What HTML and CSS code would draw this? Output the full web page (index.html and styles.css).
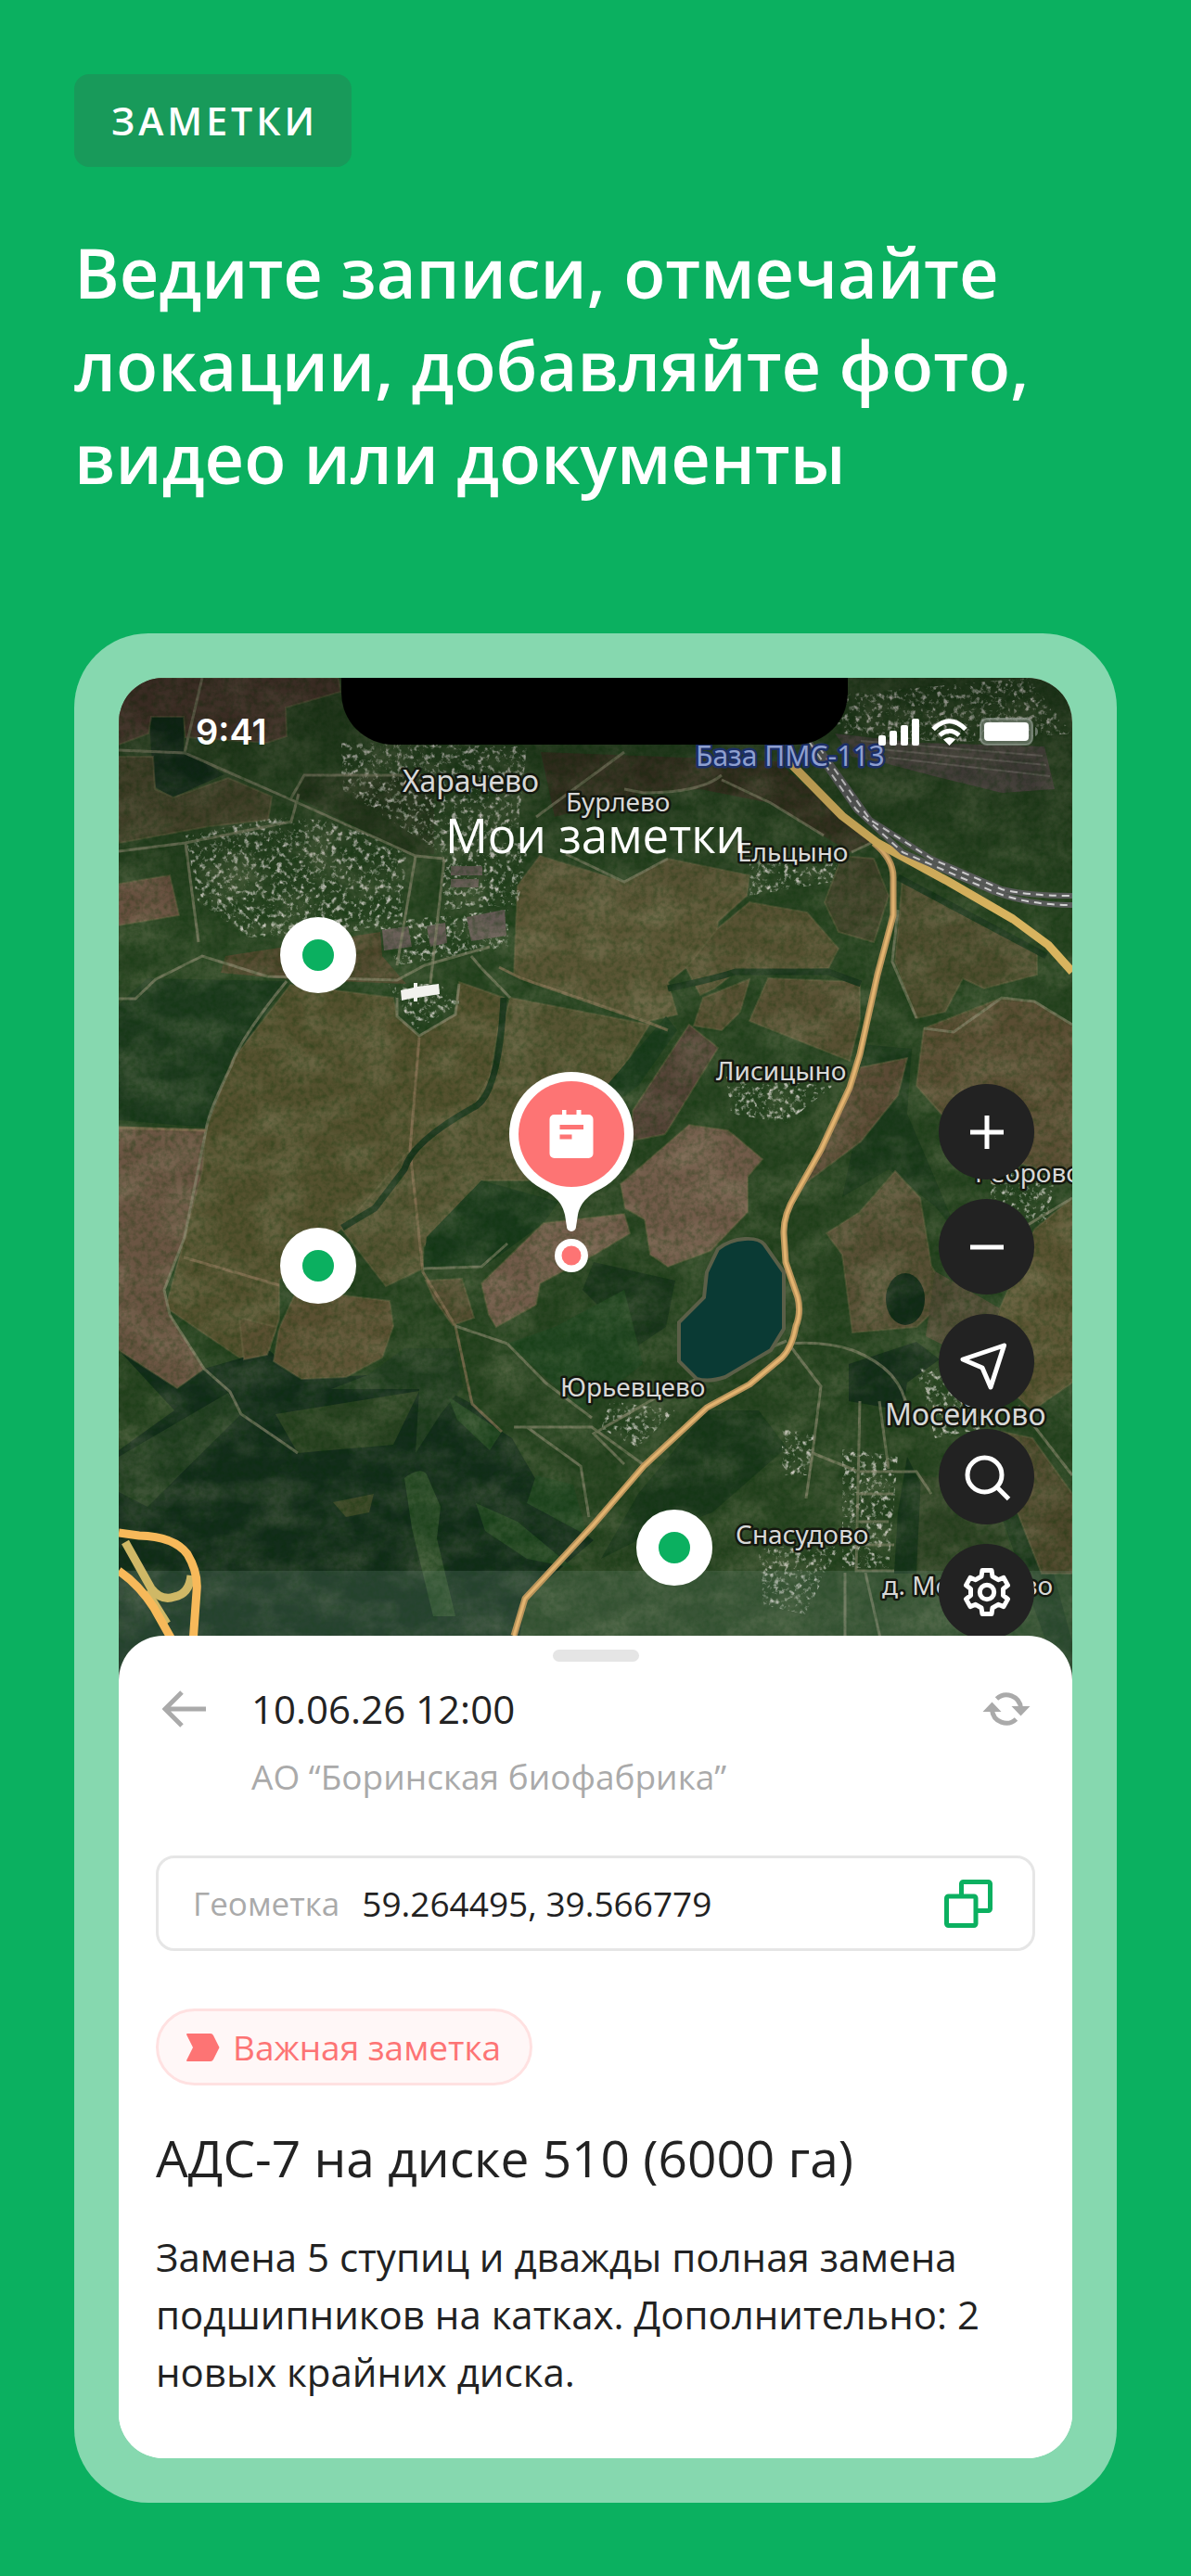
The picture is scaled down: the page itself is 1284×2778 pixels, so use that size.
FILE: index.html
```html
<!DOCTYPE html>
<html lang="ru">
<head>
<meta charset="utf-8">
<meta name="viewport" content="width=device-width, initial-scale=1">
<title>Заметки</title>
<link rel="stylesheet" href="styles.css">
</head>
<body>
<main class="page">
  <span class="badge">ЗАМЕТКИ</span>
  <h1 class="headline">Ведите записи, отмечайте локации, добавляйте фото, видео или документы</h1>

  <div class="phone">
    <div class="screen">
      <section class="map" aria-label="Карта заметок">
        <svg class="map-art" viewBox="0 0 1028 1083" preserveAspectRatio="xMidYMid slice">
          <defs>
            <filter id="grain" x="0" y="0" width="100%" height="100%">
              <feTurbulence type="fractalNoise" baseFrequency="0.16" numOctaves="3" seed="4"/>
              <feColorMatrix values="0 0 0 0 0  0 0 0 0 0.03  0 0 0 0 0  1.6 0 0 0 -0.6"/>
            </filter>
            <filter id="light" x="0" y="0" width="100%" height="100%">
              <feTurbulence type="fractalNoise" baseFrequency="0.02 0.03" numOctaves="5" seed="9"/>
              <feColorMatrix values="0 0 0 0 0.5  0 0 0 0 0.47  0 0 0 0 0.3  0 1.6 0 0 -0.6"/>
            </filter>
            <filter id="houses" x="0" y="0" width="100%" height="100%">
              <feTurbulence type="fractalNoise" baseFrequency="0.17" numOctaves="3" seed="12" result="n"/>
              <feColorMatrix in="n" values="0 0 0 0 0.56  0 0 0 0 0.56  0 0 0 0 0.5  0 4 0 0 -2.1" result="s"/>
              <feComposite in="s" in2="SourceGraphic" operator="in"/>
            </filter>
            <linearGradient id="shade" x1="0" y1="0" x2="0" y2="1">
              <stop offset="0" stop-color="#000" stop-opacity=".28"/>
              <stop offset="1" stop-color="#000" stop-opacity="0"/>
            </linearGradient>
          </defs>

          <rect width="1028" height="1083" fill="#294422"/>

          <!-- forests -->
          <g fill="#132d1b">
            <path d="M0 725L63 766 92 745 162 725 197 756 268 752 347 765 381 783 413 813 424 820 470 900 512 930 438 993 426 1083H0V833L60 790Z"/>
            <path d="M0 352L31 324 181 327 122 417 96 485 0 477Z" fill="#1e3b1f"/>
            <path d="M33 42H70V78L114 104 58 129 40 118 35 80Z"/>
            <path d="M512 630L600 650 590 700 560 720 500 660Z" fill="#1a351c"/>
            <path d="M787 740L860 716 885 735 850 760 845 790 787 780Z" fill="#152e1b"/>
            <path d="M850 840L870 880 864 966 836 966 840 900Z" fill="#17331b"/>
            <path d="M634 790L690 790 720 830 640 900 560 930 520 950 560 880Z" fill="#1b381c"/>
            <path d="M799 395L855 400 850 470 880 540 905 600 880 570 830 530 780 560 799 470Z" fill="#1d3a1d"/>
            <path d="M955 860L990 900 1028 1040V1083L1000 1040 950 900Z" fill="#1a361b"/>
          </g>

          <!-- fields -->
          <g stroke="#6f6847" stroke-opacity=".45" stroke-width="2">
            <path fill="#4c392e" d="M0 0H237L239 15 180 32 181 63 160 70 72 64 70 42H35L32 60 0 72Z"/>
            <path fill="#28391e" d="M190 128L200 103 340 104 340 190 320 192Z" stroke="none"/>
            <path fill="#48462c" d="M0 85H37L39 120 59 129 118 108 165 128 161 153 98 160 0 178Z"/>
            <path fill="#68503f" d="M0 222L55 213 65 256 0 267Z"/>
            <path fill="#4d442a" d="M115 300L180 290 282 274 284 300 310 330 185 325 110 318Z" stroke="none"/>
            <path fill="#38332 1" d="M0 0Z"/>
            <path fill="#373321" d="M455 80L710 90 811 178 788 188 703 135 627 120 566 124 470 150Z" stroke="none"/>
            <path fill="#5c5636" d="M454 192L545 220 592 195 680 213 677 235 646 263 644 285 611 313 592 328 602 363 572 370 434 324 426 320 430 224Z"/>
            <path fill="#55512f" d="M185 331L296 345 300 365 324 386 363 363 367 328 415 345 400 430 383 463 314 509 276 572 241 593 173 649V691L162 725 130 733 51 679 71 603 94 488 122 413Z"/>
            <path fill="#575433" d="M422 345L572 374 550 410 500 480 442 542H391L328 614V637L288 656 241 595 308 515 383 463 400 430Z"/>
            <path fill="#1a3a1c" d="M391 542L474 565 458 588 391 637H328L332 603Z" stroke="none"/>
            <path fill="#1c3c1e" d="M590 365L602 380 560 440 520 470 500 470 560 400Z" stroke="none"/>
            <path fill="#6b5543" d="M0 486L94 488 90 534 71 603 49 660 55 687 92 745 63 766 0 725Z"/>
            <path fill="#5b5032" d="M173 702L192 660 292 672 296 699 284 733 245 754 197 756 167 737ZM130 690L170 700 160 730 135 735Z"/>
            <path fill="#534c30" d="M331 650L370 648 383 690 360 698 340 670Z"/>
            <path fill="#42432a" d="M780 192L814 195 830 235 814 285 776 274 761 242Z"/>
            <path fill="#585233" d="M680 242L742 253 776 292 765 313 665 317 642 335 627 342 612 313 646 270Z"/>
            <path fill="#585033" d="M700 324L799 328V370L788 413 680 370ZM630 345L680 325 670 360 650 380 620 375Z"/>
            <path fill="#504d2f" d="M845 217L990 292V320L933 335 910 324 891 360 860 367 837 306Z"/>
            <path fill="#5a4d33" d="M868 378L952 345 987 349 1028 374V540L960 520 900 485 860 440Z"/>
            <path fill="#5b4a35" d="M800 420L850 410 840 450 800 500 740 545 770 480Z"/>
            <path fill="#544337" d="M615 374L646 399 589 492 554 499V467Z"/>
            <path fill="#725b4a" d="M615 482L657 488 694 519 678 538V576L638 618 592 635 573 622 567 584 546 572 541 546Z"/>
            <path fill="#725b4a" d="M458 588L545 578 551 599 513 622 454 653 450 676 407 700 399 687 391 653 419 626Z"/>
            <path fill="#584f35" d="M837 532L864 561 876 634 895 668 860 700 791 706 780 622 763 599 799 576Z"/>
            <path fill="#5a5332" d="M987 595L1028 561V760L985 790 930 740 950 680Z"/>
            <path fill="#4e4933" d="M880 640L950 680 930 740 870 710Z" stroke="none"/>
            <path fill="#4e482c" d="M952 813L985 820 1028 880V966H995L965 890Z"/>
            <path fill="#2f4325" d="M865 860L940 870 970 966H860Z" stroke="none"/>
          </g>

          <g fill="#243f23">
            <path d="M308 723H363L371 764 347 794 320 836 324 767 229 767 268 752Z"/>
            <path d="M169 794L324 769 296 827 193 836Z" fill="#2a4222"/>
            <path d="M118 771L132 794 31 894 0 878V840Z"/>
            <path d="M308 863Q325 850 332 859L347 894 343 928 363 1012H339L316 917Z" fill="#2a4b28"/>
            <path d="M231 889L275 880 270 900 245 905Z" fill="#374423"/>
            <path d="M419 718L470 700 545 660 565 740 500 790ZM355 775L413 813 400 833 365 800ZM450 860L490 870 505 925 440 890ZM385 890L430 910 490 960 440 950 395 920Z" fill="#224622"/>
          </g>
          <ellipse cx="848" cy="670" rx="21" ry="28" fill="#132b19"/>

          <!-- settlements -->
          <g filter="url(#houses)">
            <path d="M72 170L170 150 240 155 310 190 305 270 140 280 85 240Z"/>
            <path d="M240 70L440 74 430 165 350 190 240 120Z"/>
            <path d="M347 178L442 178 430 245 350 250Z"/>
            <path d="M284 263L420 250 420 290 300 310Z"/>
            <path d="M290 330L345 330 370 350 320 380Z"/>
            <path d="M680 185L775 195 770 220 680 235Z"/>
            <path d="M655 430L770 440 720 480 660 470Z"/>
            <path d="M760 20L980 0 1028 60 900 70 780 60Z"/>
            <path d="M940 520L1010 540 1000 590 940 570Z"/>
            <path d="M860 745L930 740 930 810 880 820Z"/>
            <path d="M715 810L750 815 745 860 715 860ZM780 830L840 840 830 960 780 960ZM690 940L780 930 740 1010 695 1000Z"/>
            <path d="M530 780L600 790 560 830 520 810Z"/>
          </g>
          <g fill="#655a55">
            <path d="M284 272L312 268 316 290 286 294ZM332 268L352 264 354 286 336 290ZM375 258L416 250 418 278 380 284Z"/>
            <path d="M358 203H392V213H358ZM358 217H388V226H358Z"/>
          </g>
          <path fill="#4a4540" d="M772 60L860 70 998 74 1009 120 952 124 879 106 826 92 790 85Z"/>
          <path stroke="#6b6560" stroke-width="2" d="M800 68L996 84M810 76L1000 94M830 86L1004 106"/>

          <!-- country tracks -->
          <g fill="none" stroke="#85836a" stroke-width="3" stroke-opacity=".7">
            <path d="M0 78L71 81 185 131 320 192 351 195M71 81L90 0M185 131L200 105H340"/>
            <path d="M0 187L72 178 186 155 194 125M72 178L86 285"/>
            <path d="M0 346H18L40 325 90 300 160 322 300 326 330 310 400 290"/>
            <path d="M351 195L336 330M320 192L300 310"/>
            <path d="M300 345L300 365 324 386 363 363 367 330M380 300L390 312 422 345"/>
            <path d="M181 327Q130 390 122 417Q96 470 94 488L71 603 49 660 55 687 92 745 120 770 132 794 170 820 193 836"/>
            <path stroke="#8d7457" d="M324 388L314 509 328 641 363 699 381 783 413 813"/>
            <path stroke="#8d7457" d="M410 312L434 324 572 372 592 380M70 625L173 655M0 485L94 488"/>
            <path d="M426 808H510L565 848M419 718L460 760 510 798M328 637L391 635 419 610M363 699L419 718M440 808L498 850 507 905"/>
            <path d="M545 120L566 124Q627 124 650 105M450 150L545 80M650 110L703 135 760 170M790 188L811 178M482 190L545 220 592 195"/>
            <path d="M722 718L757 764 748 836 741 885M748 836L795 855M722 718Q761 715 791 725Q845 746 850 790"/>
            <path d="M799 780L795 963H836M820 780L830 853M795 856H860L876 880M795 880H835M795 910H830M795 935H836M545 848L512 815 590 770 720 715"/>
            <path d="M783 965V1083M805 965L822 1040M860 367L834 306 840 250M868 378L900 382 952 345 987 349 1028 374M1028 561L980 590M970 785L1028 860"/>
          </g>
          <path fill="none" stroke="#1a351c" stroke-width="7" d="M415 345Q410 450 383 463Q316 500 308 530L276 572 241 593M592 335Q640 325 665 317H765L800 330M840 215L1000 300"/>

          <rect width="1028" height="1083" filter="url(#light)" opacity=".28"/>
          <rect width="1028" height="1083" filter="url(#grain)" opacity=".4"/>

          <path fill="#f2f2ee" d="M304 337L318 334V329H322V333L345 330 346 341 322 345V349H318V345L305 348Z"/>
          <path fill="#0a3a34" stroke="#5b5f48" stroke-width="4" d="M675 605Q690 604 696 611L717 641V702L703 725 654 754Q636 760 623 756L604 737V695L631 668 634 641 646 616Q658 606 675 605Z"/>
          <rect y="963" width="1028" height="120" fill="#7d9a8a" opacity=".2"/>

          <!-- highways -->
          <g fill="none" stroke-linejoin="round">
            <path stroke="#b8935a" stroke-width="7" d="M814 178Q835 195 835 215V256L818 320 799 406 788 442 757 509 730 557Q716 580 717 600L719 630 732 668Q736 685 730 699Q726 722 715 733L680 762 634 787 566 850 512 913 438 993 426 1033"/>
            <path stroke="#e3b470" stroke-width="3" d="M814 178Q835 195 835 215V256L818 320 799 406 788 442 757 509 730 557Q716 580 717 600L719 630 732 668Q736 685 730 699Q726 722 715 733L680 762 634 787 566 850 512 913 438 993 426 1033"/>
            <path stroke="#d9b45f" stroke-width="9" d="M724 92L780 149 818 178 895 220 964 260 1002 288 1028 317"/>
            <g stroke="#5b5d5c" stroke-width="6">
              <path d="M745 70L795 142 845 188 944 231Q980 245 1028 245"/>
              <path d="M755 75L772 99 810 153 876 195 952 228Q980 235 1028 235"/>
            </g>
            <g stroke="#d6d6d6" stroke-width="2" stroke-dasharray="8 6">
              <path d="M745 70L795 142 845 188 944 231Q980 245 1028 245"/>
              <path d="M755 75L772 99 810 153 876 195 952 228Q980 235 1028 235"/>
            </g>
            <g stroke-width="9">
              <path stroke="#cfb866" d="M7 932L35 982Q46 996 60 991Q76 988 78 968"/>
              <path stroke="#cfb866" d="M30 985L52 1020"/>
              <path stroke="#f7b95a" d="M0 922L22 925Q60 926 74 945Q86 965 84 985L77 1083"/>
              <path stroke="#f7b95a" d="M0 963Q22 978 38 1003L70 1060"/>
            </g>
          </g>
          <rect width="1028" height="260" fill="url(#shade)"/>

          <g class="places">
            <text class="place-l" x="306" y="123">Харачево</text>
            <text x="482" y="144">Бурлево</text>
            <text x="667" y="198">Ельцыно</text>
            <text class="place-b" x="622" y="95">База ПМС-113</text>
            <text x="644" y="434">Лисицыно</text>
            <text x="476" y="775">Юрьевцево</text>
            <text class="place-l" x="826" y="806">Мосейково</text>
            <text x="665" y="934">Снасудово</text>
            <text x="823" y="989">д. Мосейково</text>
            <text x="923" y="544">Реброво</text>
          </g>
        </svg>

        <span class="notch"></span>
        <header class="statusbar">
          <time class="clock">9:41</time>
          <div class="status-icons">
            <svg width="44" height="29" viewBox="0 0 44 29" fill="#fff"><rect y="18" width="8" height="11" rx="2"/><rect x="12" y="13" width="8" height="16" rx="2"/><rect x="24" y="7" width="8" height="22" rx="2"/><rect x="36" y="0" width="8" height="29" rx="2"/></svg>
            <svg width="39" height="29" viewBox="0 0 39 29"><g fill="none" stroke="#fff" stroke-width="5"><path d="M2 11.500Q19.500-6 37 11.500"/><path d="M9 18Q19.500 8.500 30 18"/></g><path d="M13 22.500Q19.500 17.500 26 22.500L19.500 29Z" fill="#fff"/></svg>
            <svg width="64" height="30" viewBox="0 0 64 30"><rect x="1" y="1" width="56" height="28" rx="7" fill="#8a938a" fill-opacity=".55" stroke="#9aa39a" stroke-opacity=".6" stroke-width="2"/><rect x="5" y="5" width="48" height="20" rx="4" fill="#fff"/><path d="M60 10Q63 11 63 15T60 20Z" fill="#8a938a" fill-opacity=".7"/></svg>
          </div>
        </header>
        <h2 class="map-title">Мои заметки</h2>

        <button class="marker marker-a" aria-label="Заметка 1"></button>
        <button class="marker marker-b" aria-label="Заметка 2"></button>
        <button class="marker marker-c" aria-label="Заметка 3"></button>
        <button class="pin" aria-label="Важная заметка">
          <svg width="134" height="216" viewBox="0 0 134 216">
            <g fill="#fff"><circle cx="67" cy="67" r="67"/><path d="M28 121C48 132 57 140 60 154L62 167A5 5 0 0 0 72 167L74 154C77 140 86 132 106 121Z"/><circle cx="67" cy="198" r="18"/></g>
            <g fill="#fd7474"><circle cx="67" cy="67" r="57"/><circle cx="67" cy="198" r="10.500"/></g>
            <path fill="#fff" d="M48.500 46H57V41H61.500V46H72.500V41H77.500V46H85.500A5 5 0 0 1 90.500 51V88A5 5 0 0 1 85.500 93H48.500A5 5 0 0 1 43.500 88V51A5 5 0 0 1 48.500 46Z"/>
            <path fill="#fd7474" d="M54.500 57H80V62H54.500ZM54.500 67.500H67.500V72.500H54.500Z"/>
          </svg>
        </button>

        <nav class="controls" aria-label="Управление картой">
          <button class="control" aria-label="Приблизить"><svg viewBox="-32 -32 64 64"><path d="M-18 0H18M0-18V18"/></svg></button>
          <button class="control" aria-label="Отдалить"><svg viewBox="-32 -32 64 64"><path d="M-18 0H18"/></svg></button>
          <button class="control" aria-label="Моё местоположение"><svg viewBox="-32 -32 64 64"><path d="M18.500-18L-26-3-5 6 4 27Z"/></svg></button>
          <button class="control" aria-label="Поиск"><svg viewBox="-32 -32 64 64"><circle cx="-2.500" cy="-2.500" r="18.500"/><path d="M11 11L23.500 23.500"/></svg></button>
          <button class="control" aria-label="Настройки"><svg viewBox="-32 -32 64 64"><path d="M-5-23.500H5L6-17 12.200-13.300 18-15.600 22.600-7.400 17.500-3.600V3.600L22.600 7.400 18 15.600 12.200 13.300 6 17 5 23.500H-5L-6 17-12.200 13.300-18 15.600-22.600 7.400-17.500 3.600V-3.600L-22.600-7.400-18-15.600-12.200-13.300-6-17Z"/><circle r="7.700"/></svg></button>
        </nav>
      </section>

      <article class="sheet">
        <span class="handle"></span>
        <header class="note-head">
          <button class="icon-button" aria-label="Назад"><svg width="48" height="40" viewBox="0 0 48 40"><path d="M4 20H47M21 2L3 20 21 38" fill="none" stroke="#aaa" stroke-width="5"/></svg></button>
          <time class="note-date">10.06.26 12:00</time>
          <button class="icon-button" aria-label="Обновить"><svg width="52" height="40" viewBox="-26 -20 52 40"><g fill="none" stroke="#aaa" stroke-width="5"><path d="M-10.500-11A15.500 15.500 0 0 1 15.500-1"/><path d="M10.500 11A15.500 15.500 0 0 1-15.500 1"/></g><path fill="#aaa" d="M5.500-3H25.500L15.500 7.500ZM-5.500 3H-25.500L-15.500-7.500Z"/></svg></button>
          <p class="company">АО “Боринская биофабрика”</p>
        </header>

        <div class="geo">
          <label class="geo-label" for="geo">Геометка</label>
          <input class="geo-value" id="geo" type="text" value="59.264495, 39.566779" readonly>
          <button class="icon-button" aria-label="Скопировать"><svg width="52" height="52" viewBox="0 0 52 52" fill="#fff" stroke="#0bb060" stroke-width="5"><rect x="18.500" y="2.500" width="31" height="31" rx="2"/><rect x="2.500" y="18" width="31.500" height="31.500" rx="2"/></svg></button>
        </div>

        <span class="chip"><svg width="36" height="30" viewBox="0 0 36 30"><path fill="#fd7474" d="M1 0H26Q28 0 29 2L35.500 15 29 28Q28 30 26 30H1Q0 30 0 29L7 15 0 1Q0 0 1 0Z"/></svg>Важная заметка</span>

        <h3 class="note-title">АДС-7 на диске 510 (6000 га)</h3>
        <p class="note-text">Замена 5 ступиц и дважды полная замена подшипников на катках. Дополнительно: 2 новых крайних диска.</p>
      </article>
    </div>
  </div>
</main>
</body>
</html>
```
FILE: styles.css
```css
* {
  box-sizing: border-box;
}

body {
  margin: 0;
  background: #0bb060;
  color: #222;
  font-family: "Open Sans", "Noto Sans", sans-serif;
}

h1, h2, h3, p {
  margin: 0;
}

button {
  padding: 0;
  border: 0;
  background: none;
  font: inherit;
  cursor: pointer;
}

svg {
  display: block;
}

.page {
  display: flex;
  flex-direction: column;
  align-items: flex-start;
  padding: 80px;
}

.badge {
  padding: 0 36px 0 40px;
  border-radius: 16px;
  background: #189a5a;
  color: #fff;
  font-size: 41px;
  font-weight: 600;
  line-height: 100px;
  letter-spacing: 4px;
}

.headline {
  margin-top: 64px;
  color: #fff;
  font-size: 74px;
  font-weight: 600;
  line-height: 100px;
}

.phone {
  align-self: stretch;
  margin-top: 139px;
  padding: 48px;
  border-radius: 80px;
  background: #86d8af;
}

.screen {
  overflow: hidden;
  border-radius: 48px;
  background: #fff;
}

/* Map */

.map {
  position: relative;
  height: 1083px;
}

.map-art {
  position: absolute;
  inset: 0;
  width: 100%;
  height: 100%;
}

.places {
  fill: #d8d8d8;
  stroke: #14180f;
  stroke-width: 5px;
  stroke-linejoin: round;
  paint-order: stroke;
  font-family: "Noto Sans", sans-serif;
  font-size: 28px;
}

.place-l {
  font-size: 32px;
}

.place-b {
  fill: #8e9fcf;
  stroke: #1c2f66;
  font-size: 30px;
}

.notch {
  position: absolute;
  top: 0;
  left: 50%;
  width: 546px;
  height: 72px;
  margin-left: -274px;
  border-radius: 0 0 56px 56px;
  background: #000;
}

.statusbar {
  position: relative;
  display: flex;
  align-items: center;
  justify-content: space-between;
  height: 116px;
  padding: 0 36px 0 83px;
}

.clock {
  color: #fff;
  font-family: Inter, sans-serif;
  font-size: 38px;
  font-weight: 600;
}

.status-icons {
  display: flex;
  align-items: center;
  gap: 13px;
}

.map-title {
  position: relative;
  margin-top: 23px;
  color: #fff;
  font-size: 51px;
  font-weight: 500;
  line-height: 60px;
  text-align: center;
}

.marker {
  position: absolute;
  width: 82px;
  height: 82px;
  border: 24px solid #fff;
  border-radius: 50%;
  background: #0bb060;
}

.marker-a {
  top: 258px;
  left: 174px;
}

.marker-b {
  top: 593px;
  left: 174px;
}

.marker-c {
  top: 897px;
  left: 558px;
}

.pin {
  position: absolute;
  top: 425px;
  left: 421px;
}

.controls {
  position: absolute;
  top: 438px;
  right: 41px;
  display: flex;
  flex-direction: column;
  gap: 21px;
}

.control {
  display: grid;
  place-items: center;
  width: 103px;
  height: 103px;
  border-radius: 50%;
  background: #222;
}

.control svg {
  width: 64px;
  height: 64px;
  fill: none;
  stroke: #fff;
  stroke-width: 5px;
  stroke-linejoin: round;
}

/* Note sheet */

.sheet {
  position: relative;
  display: flex;
  flex-direction: column;
  align-items: flex-start;
  margin-top: -50px;
  padding: 15px 40px 62px;
  border-radius: 48px 48px 0 0;
  background: #fff;
}

.handle {
  align-self: center;
  width: 93px;
  height: 13px;
  border-radius: 8px;
  background: #e5e5e5;
}

.note-head {
  align-self: stretch;
  display: grid;
  grid-template-columns: 48px 1fr 52px;
  align-items: center;
  column-gap: 48px;
  row-gap: 17px;
  margin-top: 21px;
  padding: 0 5px 0 7px;
}

.note-date {
  font-size: 42px;
  font-weight: 500;
  line-height: 60px;
}

.company {
  grid-column: 2;
  color: #aaa;
  font-size: 37px;
  line-height: 52px;
}

.geo {
  align-self: stretch;
  display: flex;
  align-items: center;
  margin-top: 59px;
  height: 103px;
  padding: 0 43px 0 37px;
  border: 3px solid #e6e6e6;
  border-radius: 20px;
}

.geo-label {
  color: #aaa;
  font-size: 35px;
}

.geo-value {
  flex: 1;
  min-width: 0;
  padding: 0 24px;
  border: 0;
  color: #222;
  font: 500 37px "Open Sans", "Noto Sans", sans-serif;
}

.chip {
  display: flex;
  align-items: center;
  gap: 14px;
  height: 83px;
  margin-top: 62px;
  padding: 0 31px 0 30px;
  border: 3px solid #ffe1e1;
  border-radius: 42px;
  background: #fff7f7;
  color: #fd7474;
  font-size: 37px;
}

.note-title {
  margin-top: 43px;
  font-size: 55px;
  font-weight: 500;
  line-height: 70px;
}

.note-text {
  margin-top: 41px;
  font-size: 42px;
  line-height: 62px;
}
```
